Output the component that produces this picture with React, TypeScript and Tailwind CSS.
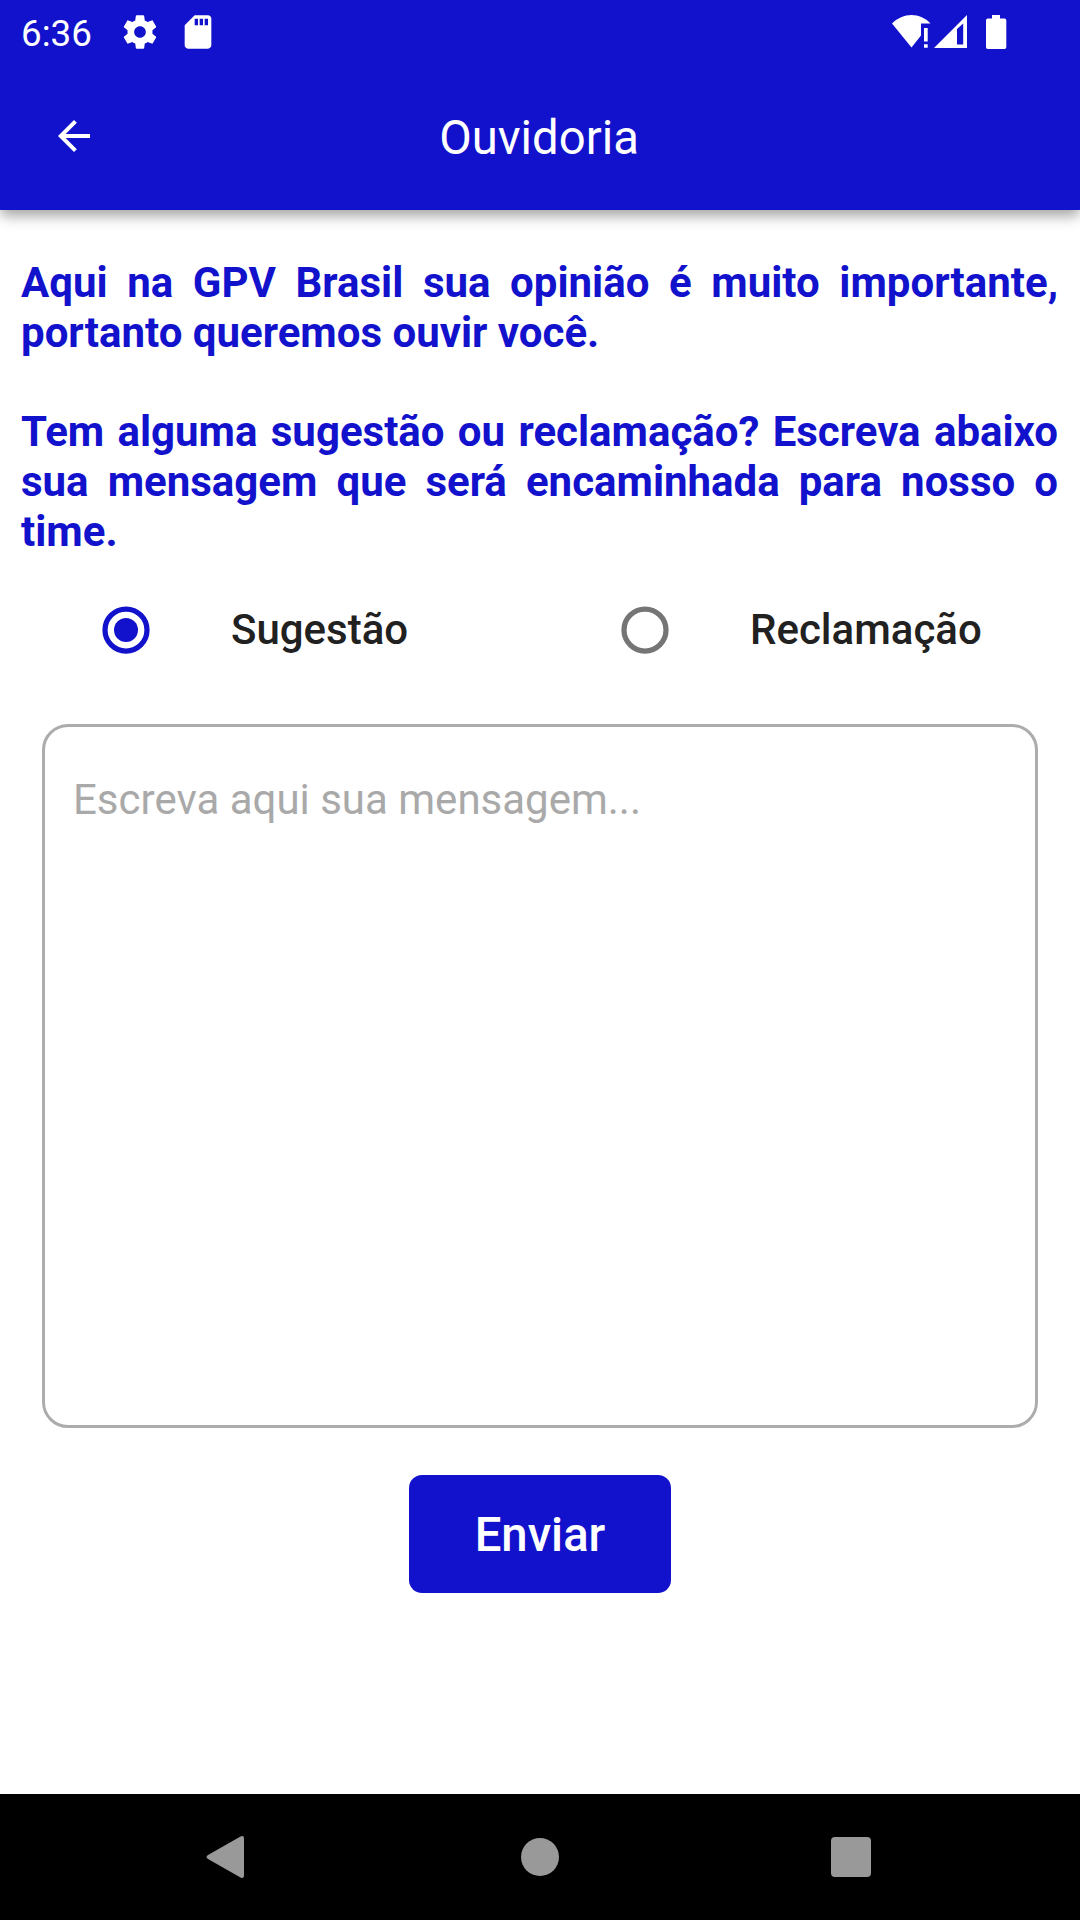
import React, { useState } from 'react';
import { MdArrowBack, MdSdStorage } from 'react-icons/md';

const StatusBar = () => (
  <div className="flex h-[63px] items-center justify-between pl-[21px] pr-[73px] text-white">
    <div className="flex items-center">
      <span className="w-[99px] pt-[3px] text-[36.75px] leading-[43px]">6:36</span>
      <svg viewBox="0 0 24 24" fill="currentColor" className="h-[40px] w-[40px]">
        <path d="M19.43 12.98c.04-.32.07-.64.07-.98s-.03-.66-.07-.98l2.11-1.65c.19-.15.24-.42.12-.64l-2-3.46c-.12-.22-.39-.3-.61-.22l-2.49 1c-.52-.4-1.08-.73-1.69-.98l-.38-2.65C14.46 2.18 14.25 2 14 2h-4c-.25 0-.46.18-.49.42l-.38 2.65c-.61.25-1.17.59-1.69.98l-2.49-1c-.23-.09-.49 0-.61.22l-2 3.46c-.13.22-.07.49.12.64l2.11 1.65c-.04.32-.07.65-.07.98s.03.66.07.98l-2.11 1.65c-.19.15-.24.42-.12.64l2 3.46c.12.22.39.3.61.22l2.49-1c.52.4 1.08.73 1.69.98l.38 2.65c.03.24.24.42.49.42h4c.25 0 .46-.18.49-.42l.38-2.65c.61-.25 1.17-.59 1.69-.98l2.49 1c.23.09.49 0 .61-.22l2-3.46c.12-.22.07-.49-.12-.64l-2.11-1.65zM12 15.5c-1.93 0-3.5-1.57-3.5-3.5s1.57-3.5 3.5-3.5 3.5 1.57 3.5 3.5-1.57 3.5-3.5 3.5z" />
      </svg>
      <MdSdStorage className="ml-[18px] h-[40px] w-[40px]" />
    </div>

    <div className="flex items-center">
      {/* Wi-Fi with alert */}
      <svg viewBox="0 0 39 34" fill="currentColor" className="h-[34px] w-[39px]">
        <path d="M0 8.500C5.500 3 12.500 0 19.500 0S33.500 3 38.500 8.500H29V20.500L19.500 32.500Z" />
        <path d="M32 13h3.700v13.500h-3.700zM32 29.300h3.700v3.500h-3.700z" />
      </svg>
      {/* Mobile signal */}
      <svg viewBox="0 0 33 34" fill="currentColor" fillRule="evenodd" className="ml-[3px] h-[34px] w-[33px]">
        <path d="M33 0V33H0ZM29.200 8.500L23 14V29.400H29.200Z" />
      </svg>
      {/* Battery */}
      <svg viewBox="0 0 21 34" fill="currentColor" className="ml-[19px] h-[34px] w-[21px]">
        <path d="M6 0h8v3.500h4.500a1.800 1.800 0 0 1 1.800 1.800v26.900a1.800 1.800 0 0 1-1.800 1.800H1.800A1.800 1.800 0 0 1 0 32.200V5.300a1.800 1.800 0 0 1 1.800-1.800H6z" />
      </svg>
    </div>
  </div>
);

const NavigationBar = () => (
  <nav className="grid h-[126px] grid-cols-[1fr_auto_1fr] items-center bg-black pl-[206px] pr-[209px] text-[#999999]">
    <svg viewBox="0 0 38 42" fill="currentColor" className="h-[42px] w-[38px]">
      <path d="M34.500.6Q38-1.200 38 2.500V39.500Q38 43.200 34.500 41.400L2 23Q-1 21 2 19Z" />
    </svg>
    <div className="ml-[3px] h-[38px] w-[38px] rounded-full bg-[#999999]" />
    <div className="h-[40px] w-[40px] justify-self-end rounded-[4px] bg-[#999999]" />
  </nav>
);

const RadioMark = ({ checked }: { checked: boolean }) => (
  <svg viewBox="0 0 48 48" className={checked ? 'h-12 w-12 text-[#1212cc]' : 'h-12 w-12 text-[#757575]'}>
    <circle cx="24" cy="24" r="21" fill="none" stroke="currentColor" strokeWidth="5.25" />
    {checked && <circle cx="24" cy="24" r="12" fill="currentColor" />}
  </svg>
);

const options = [
  { id: 'sugestao', label: 'Sugestão' },
  { id: 'reclamacao', label: 'Reclamação' },
];

const App = () => {
  const [selected, setSelected] = useState('sugestao');
  const [message, setMessage] = useState('');

  return (
    <div className="flex h-[1920px] w-[1080px] flex-col overflow-hidden bg-white font-[Roboto,sans-serif]">
      <header className="z-10 h-[210px] shrink-0 bg-[#1212cc] shadow-[0_10px_13px_-2px_rgba(0,0,0,0.2),0_4px_10px_rgba(0,0,0,0.18)]">
        <StatusBar />
        <div className="grid h-[147px] grid-cols-[1fr_auto_1fr] items-center text-white">
          <button className="mb-px ml-[50px] w-12" aria-label="Voltar">
            <MdArrowBack className="h-12 w-12" />
          </button>
          <h1 className="mr-[2px] pt-[2px] text-[47.25px] leading-[56px]">Ouvidoria</h1>
        </div>
      </header>

      <main className="flex flex-1 flex-col">
        <div className="mt-[48px] pl-[21px] pr-[22px] text-justify text-[42px] font-bold leading-[50px] text-[#1212cc]">
          <p>Aqui na GPV Brasil sua opinião é muito importante, portanto queremos ouvir você.</p>
          <p className="mt-[49px]">
            Tem alguma sugestão ou reclamação? Escreva abaixo sua mensagem que será encaminhada para nosso o time.
          </p>
        </div>

        <div className="mt-[24px] grid h-[98px] grid-cols-2 px-[21px]">
          {options.map((option) => (
            <button
              key={option.id}
              className="flex items-center pl-[81px] text-[42px] font-medium leading-[50px] text-[#212121]"
              onClick={() => setSelected(option.id)}
            >
              <RadioMark checked={selected === option.id} />
              <span className="ml-[81px]">{option.label}</span>
            </button>
          ))}
        </div>

        <textarea
          className="mx-[42px] mt-[45px] h-[704px] resize-none rounded-[26px] border-[3px] border-[#acacac] px-[28px] py-[48px] text-[42px] leading-[50px] text-[#212121] outline-none placeholder:text-[#a9a9a9]"
          placeholder="Escreva aqui sua mensagem..."
          value={message}
          onChange={(e) => setMessage(e.target.value)}
        />

        <button className="mx-auto mt-[47px] h-[118px] w-[262px] rounded-[13px] bg-[#1212cc] pt-[2px] text-[47.25px] font-medium leading-[56px] text-white">
          Enviar
        </button>
      </main>

      <NavigationBar />
    </div>
  );
};

export default App;
